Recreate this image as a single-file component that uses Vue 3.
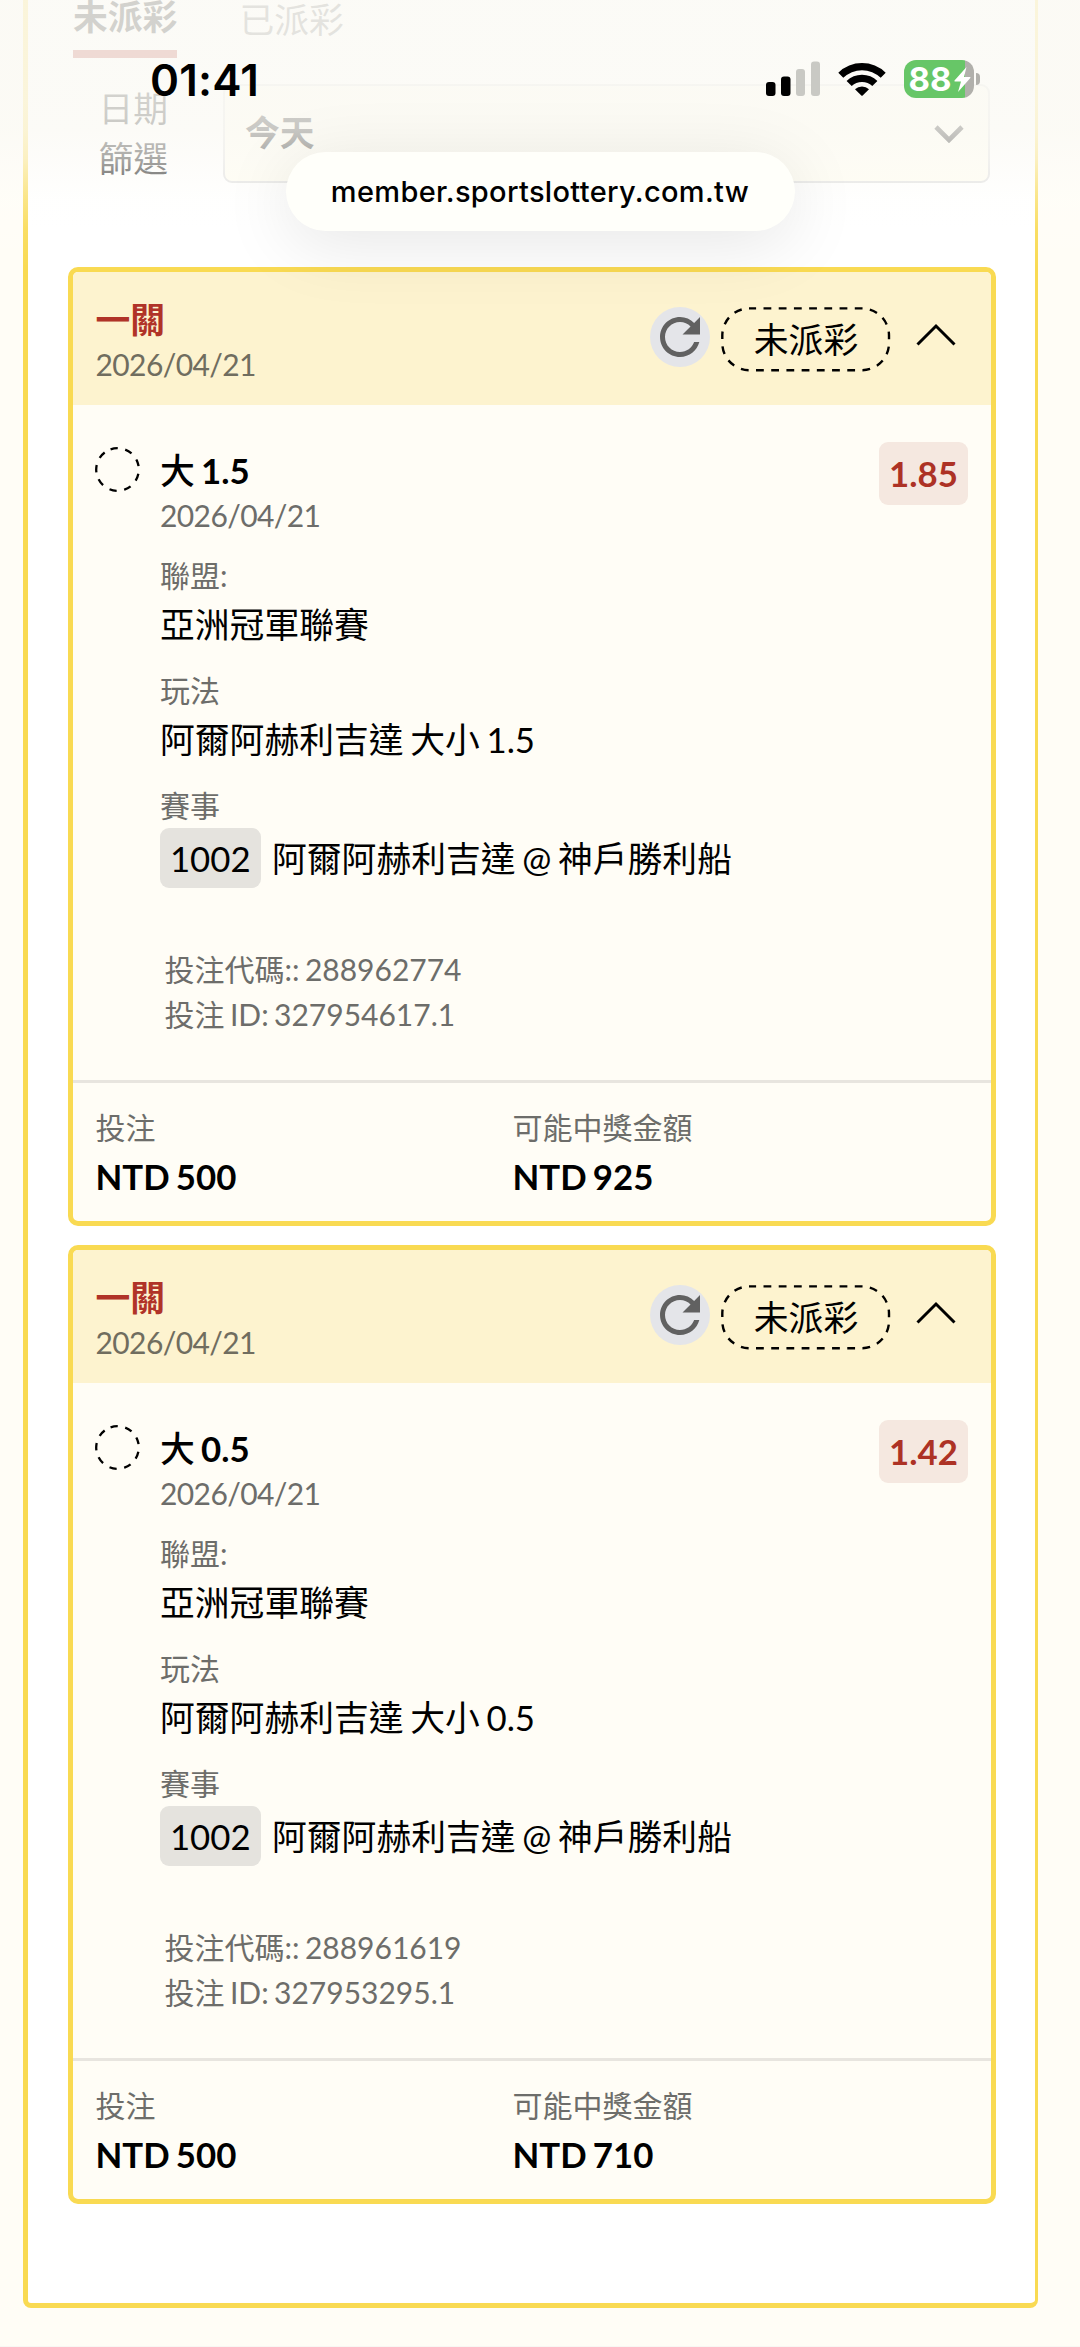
<script setup>
const bets = [
  { side: '大', line: '1.5', odds: '1.85', market: '阿爾阿赫利吉達 大小 1.5', code: '288962774', id: '327954617.1', win: 'NTD 925' },
  { side: '大', line: '0.5', odds: '1.42', market: '阿爾阿赫利吉達 大小 0.5', code: '288961619', id: '327953295.1', win: 'NTD 710' },
]
</script>

<template>
  <div class="page">
    <main class="panel">
      <nav class="tabs">
        <span class="tab active">未派彩</span>
        <span class="tab">已派彩</span>
      </nav>
      <div class="filter">
        <label class="filter-label">日期<br />篩選</label>
        <div class="select">
          <span>今天</span>
          <svg width="30" height="18" viewBox="0 0 30 18"><path d="M2 2 15 15 28 2" fill="none" stroke="#000" stroke-width="4.6" /></svg>
        </div>
      </div>

      <section v-for="bet in bets" :key="bet.id" class="card">
        <header class="card-head">
          <div>
            <div class="head-title">一關</div>
            <div class="muted date">2026/04/21</div>
          </div>
          <div class="head-actions">
            <span class="refresh">
              <svg width="60" height="60" viewBox="0 0 24 24"><path fill="#616161" d="M17.65 6.35C16.2 4.9 14.21 4 12 4c-4.42 0-7.99 3.58-7.99 8s3.57 8 7.99 8c3.73 0 6.84-2.55 7.73-6h-2.08c-.82 2.33-3.04 4-5.65 4-3.31 0-6-2.69-6-6s2.69-6 6-6c1.66 0 3.14.69 4.22 1.78L13 11h7V4l-2.35 2.35z" /></svg>
            </span>
            <span class="status">
              <svg class="status-line" width="170" height="66" viewBox="0 0 170 66">
                <rect x="1.3" y="1.4" width="166.7" height="61.8" rx="27" fill="none" stroke="#000" stroke-width="2.4" stroke-dasharray="7.8 7.41" stroke-dashoffset="1" />
              </svg>
              <span>未派彩</span>
            </span>
            <svg class="chevron" width="40" height="24" viewBox="0 0 40 24"><path d="M1.5 21.500 20 3 38.500 21.500" fill="none" stroke="#000" stroke-width="3" /></svg>
          </div>
        </header>

        <div class="card-body">
          <svg class="pending" width="46" height="46" viewBox="0 0 46 46">
            <circle cx="22.500" cy="22.500" r="21.300" fill="none" stroke="#000" stroke-width="2.300" stroke-dasharray="7.3 7.57" transform="rotate(-109 22.500 22.500)" />
          </svg>
          <div class="detail">
            <div class="pick"><span class="side">{{ bet.side }}</span> {{ bet.line }}</div>
            <div class="muted date">2026/04/21</div>
            <dl class="fields">
              <div class="field"><dt>聯盟:</dt><dd>亞洲冠軍聯賽</dd></div>
              <div class="field"><dt>玩法</dt><dd>{{ bet.market }}</dd></div>
              <div class="field"><dt>賽事</dt><dd class="match"><span class="chip">1002</span><span>阿爾阿赫利吉達 @ 神戶勝利船</span></dd></div>
            </dl>
            <div class="codes">
              <div>投注代碼:: {{ bet.code }}</div>
              <div>投注 ID: {{ bet.id }}</div>
            </div>
          </div>
          <span class="odds">{{ bet.odds }}</span>
        </div>

        <footer class="card-foot">
          <div class="sum"><div class="muted">投注</div><strong>NTD 500</strong></div>
          <div class="sum"><div class="muted">可能中獎金額</div><strong>{{ bet.win }}</strong></div>
        </footer>
      </section>
    </main>

    <div class="scrim"></div>

    <div class="statusbar">
      <span class="clock">01:41</span>
      <div class="indicators">
        <svg width="54" height="36" viewBox="0 0 54 36">
          <rect x="0" y="21" width="9.5" height="14" rx="3" />
          <rect x="15" y="15.500" width="9.500" height="19.500" rx="3" />
          <rect x="30" y="8" width="9" height="27" rx="3" fill="#c9c9c4" />
          <rect x="45" y="0.500" width="9" height="34.500" rx="3" fill="#c9c9c4" />
        </svg>
        <svg class="wifi" width="48" height="36" viewBox="0 0 48 36">
          <path d="M0.300 11.700a34 34 0 0 1 47.400 0l-5 5.100a26.700 26.700 0 0 0-37.400 0z" />
          <path d="M8.600 20a22 22 0 0 1 30.800 0l-5.100 5.100a14.800 14.800 0 0 0-20.600 0z" />
          <path d="M17 28.300a10.300 10.300 0 0 1 14 0l-6.300 6.200q-.7.600-1.400 0z" />
        </svg>
        <div class="battery">
          <div class="cell"><span>88</span></div>
          <svg class="bolt" width="19" height="27" viewBox="0 0 19 27"><path d="M13.500 1 1.500 14.500Q1 15.500 2 15.500H8L5 26 17.300 12Q18 11 16.800 11H11z" fill="#fff" /></svg>
          <i class="nub"></i>
        </div>
      </div>
    </div>

    <div class="address">member.sportslottery.com.tw</div>
  </div>
</template>

<style>
body { margin: 0; background: #fffdf6; }
</style>

<style scoped>
.page {
  position: relative;
  box-sizing: border-box;
  width: 1080px;
  height: 2347px;
  overflow: hidden;
  border-bottom: 1px solid #f8f7f3;
  background: #fffdf6;
  color: #000;
  font-family: Lato, "Noto Sans CJK TC", sans-serif;
  font-size: 34.8px;
  word-spacing: -.065em;
}
.panel {
  box-sizing: border-box;
  height: 2308px;
  margin: 0 42px 0 23px;
  padding: 0 39.5px;
  border: solid #f9da52;
  border-width: 0 3px 5px 5px;
  border-radius: 0 0 8px 8px;
  background: #fff;
}
.tabs { display: flex; gap: 62px; height: 58px; padding-left: 5.500px; }
.tab { box-sizing: border-box; height: 58px; padding-top: 3px; line-height: 34px; color: #6b6b6b; }
.tab.active { padding-top: 0; border-bottom: 8px solid #b03328; color: #000; font-weight: 700; line-height: 33px; }
.filter { display: flex; justify-content: space-between; margin-top: 26px; padding: 0 5.500px 0 31px; height: 99px; }
.filter-label { line-height: 49.500px; text-align: right; }
.select {
  box-sizing: border-box;
  display: flex;
  align-items: center;
  justify-content: space-between;
  width: 767px;
  height: 99px;
  padding: 0 24px 0 20px;
  border: 2px solid #ddd;
  border-radius: 9px;
  background: #fffdf0;
  font-weight: 700;
}
.select span { padding-bottom: 5px; }

.card {
  box-sizing: border-box;
  height: 959px;
  margin-bottom: 19px;
  border: 5px solid #f9da52;
  border-radius: 10px;
  background: #fffdf6;
  overflow: hidden;
}
.filter + .card { margin-top: 84px; }
.muted, dt, .codes { color: #6d6d6a; font-size: 30px; line-height: 45px; }
.date { letter-spacing: -.6px; }
.card-head {
  box-sizing: border-box;
  display: flex;
  justify-content: space-between;
  height: 132.500px;
  padding: 26px 34.500px 0 23px;
  background: #fdf3cf;
}
.card-head .date { color: #706d5f; }
.head-title { color: #b03328; font-weight: 700; line-height: 44px; }
.head-actions { display: flex; align-items: flex-start; padding-top: 8.500px; }
.refresh { display: flex; align-items: center; justify-content: center; width: 60px; height: 60px; border-radius: 50%; background: #e4e5e9; }
.status { position: relative; box-sizing: border-box; display: flex; align-items: center; justify-content: center; width: 170px; height: 66px; margin: 0 25px 0 11.500px; padding-bottom: 3px; }
.status-line { position: absolute; inset: 0; }
.chevron { margin-top: 16.500px; }
.card-body { display: flex; align-items: flex-start; height: 675.500px; padding: 42px 22.500px 0 22px; box-sizing: border-box; }
.pending { flex: none; }
.detail { flex: 1; padding: 1px 0 0 19.500px; }
.pick { font-weight: 700; line-height: 45px; }
.side { font-weight: 500; }
.fields { margin: 15.500px 0 0; }
.field { margin-bottom: 17px; }
.field:last-child { margin: 0; }
dd { margin: 0; line-height: 53px; }
.match { display: flex; align-items: center; height: 60px; gap: 11.500px; }
.chip { width: 100.500px; height: 60px; border-radius: 9px; background: #e5e3de; line-height: 61px; text-align: center; }
.codes { margin: 58.500px 0 0 4.500px; }
.odds { flex: none; width: 89px; height: 63px; margin-top: -5px; border-radius: 9px; background: #f5e8e0; color: #ad3225; font-weight: 700; line-height: 63px; text-align: center; }
.card-foot { display: flex; box-sizing: border-box; height: 141px; padding: 22px 23px 0; border-top: 3px solid #e8e5df; }
.sum { width: 417px; }
.sum strong { display: block; line-height: 53px; }

.scrim {
  position: absolute;
  inset: 0 0 auto;
  height: 270px;
  background: linear-gradient(rgba(251, 250, 245, .84) 0, rgba(251, 250, 245, .84) 100px, rgba(251, 250, 245, .8) 130px, rgba(252, 251, 247, .68) 158px, rgba(254, 254, 251, .3) 200px, rgba(255, 255, 255, .1) 230px, rgba(255, 255, 255, 0));
}
.statusbar {
  position: absolute;
  inset: 60px 100px auto 150px;
  display: flex;
  align-items: flex-start;
  justify-content: space-between;
  font-family: Inter, sans-serif;
}
.clock { font-size: 44px; font-weight: 600; line-height: 40px; letter-spacing: .2px; }
.indicators { display: flex; align-items: flex-start; }
.indicators > svg { margin-top: 1px; }
.wifi { margin: 0 18px; }
.battery { position: relative; display: flex; align-items: center; width: 76px; height: 38px; }
.cell {
  width: 70px;
  height: 38px;
  border-radius: 12px;
  background: linear-gradient(90deg, #67c667 61.500px, #b1b0ab 61.500px);
  color: #fff;
  font-size: 33px;
  font-weight: 700;
  line-height: 38px;
}
.cell span { padding-left: 4.500px; }
.bolt { position: absolute; left: 49px; top: 6px; }
.nub { width: 4px; height: 12px; margin-left: 2px; border-radius: 0 5px 5px 0; background: #b1b0ab; }
.address {
  position: absolute;
  left: 285.500px;
  top: 152px;
  width: 509px;
  height: 79px;
  border-radius: 40px;
  background: #fffffa;
  box-shadow: 0 12px 70px rgba(0, 0, 0, .1);
  font: 500 29px/79px Inter, sans-serif;
  letter-spacing: .33px;
  text-align: center;
}
</style>
